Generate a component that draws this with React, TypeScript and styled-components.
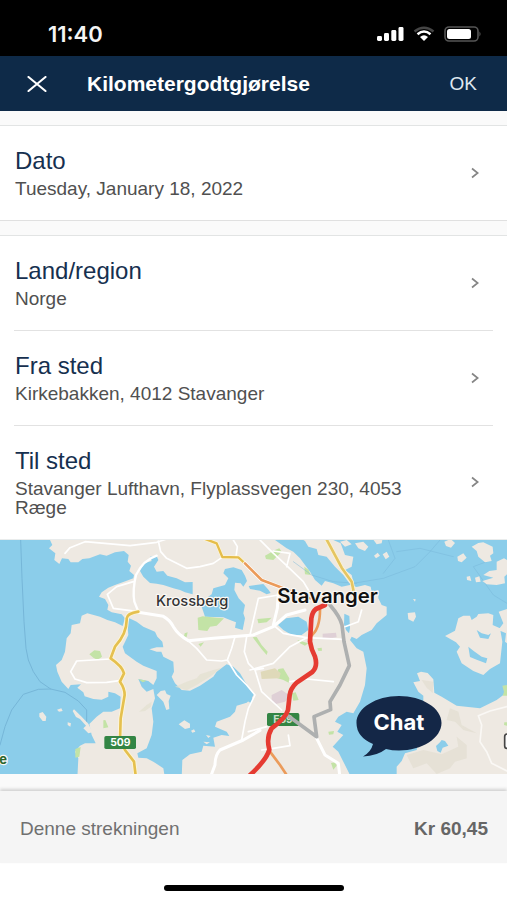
import React from "react";
import styled, { createGlobalStyle } from "styled-components";

const GlobalStyle = createGlobalStyle`
  *, *::before, *::after { box-sizing: border-box; }
  body { margin: 0; background: #fff; font-family: "Liberation Sans", Arial, sans-serif; }
  button { font: inherit; color: inherit; background: none; border: 0; padding: 0; cursor: pointer; }
  h1, h2, p { margin: 0; }
`;

const Screen = styled.div`
  display: flex;
  flex-direction: column;
  min-height: 100vh;
  background: #fff;
`;

const StatusBar = styled.div`
  display: flex;
  align-items: center;
  justify-content: space-between;
  height: 56px;
  padding: 12px 25px 0 48px;
  background: #000;
  color: #f4f4f4;
`;

const Clock = styled.time`
  font-family: Inter, sans-serif;
  font-size: 22px;
  line-height: 24px;
  font-weight: 600;
`;

const StatusIcons = styled.div`
  display: flex;
  align-items: center;
  gap: 9px;
  svg { display: block; }
`;

const Header = styled.header`
  display: flex;
  align-items: center;
  height: 55px;
  padding: 0 30px 0 22px;
  background: #0e2a48;
  color: #fff;
`;

const CloseButton = styled.button`
  display: flex;
  align-items: center;
  justify-content: center;
  width: 30px;
  height: 30px;
  margin-right: 35px;
`;

const HeaderTitle = styled.h1`
  flex: 1;
  font-size: 21px;
  line-height: 24px;
  font-weight: 700;
`;

const OkButton = styled.button`
  font-size: 19px;
  line-height: 24px;
  color: #dfe7f0;
`;

const Body = styled.main`
  display: flex;
  flex-direction: column;
  gap: 14px;
  padding: 14px 0 17px;
  background: #fafafa;
`;

const Group = styled.section<{ $closed?: boolean }>`
  background: #fff;
  border-top: 1px solid #e2e4e4;
  border-bottom: ${(p) => (p.$closed ? "1px solid #e0e0e0" : "0")};
`;

const Row = styled.button`
  display: flex;
  align-items: center;
  justify-content: space-between;
  width: calc(100% - 28px);
  margin: 0 14px;
  padding: 21px 14px 22px 1px;
  text-align: left;
  & + & { border-top: 1px solid #e2e2e2; }
`;

const RowText = styled.span`
  display: flex;
  flex-direction: column;
  gap: 4px;
  max-width: 400px;
`;

const RowTitle = styled.span`
  font-size: 24px;
  line-height: 28px;
  color: #16304f;
`;

const RowValue = styled.span`
  font-size: 19px;
  line-height: 19px;
  color: #505050;
`;

const MapArea = styled.div`
  position: relative;
  border-top: 1px solid #e9ecec;
`;

const MapDrawing = styled.svg`
  display: block;
  width: 100%;
  height: auto;
`;

const ChatButton = styled.button`
  position: absolute;
  right: 65px;
  bottom: 17px;
  width: 86px;
  height: 62px;
  color: #fff;
  svg { position: absolute; inset: 0; }
`;

const ChatLabel = styled.span`
  position: relative;
  display: block;
  padding-bottom: 8px;
  font-family: Inter, sans-serif;
  font-size: 22px;
  line-height: 24px;
  font-weight: 700;
`;

const Footer = styled.footer`
  display: flex;
  align-items: center;
  justify-content: space-between;
  height: 72px;
  padding: 4px 19px 0 20px;
  background: #f5f5f5;
  box-shadow: 0 -2px 3px #d2d2d2;
  font-size: 19px;
  color: #707070;
`;

const Amount = styled.strong`
  color: #666;
`;

const HomeArea = styled.div`
  display: flex;
  justify-content: center;
  padding: 22px 0 8px;
`;

const HomeIndicator = styled.div`
  width: 180px;
  height: 6px;
  border-radius: 3px;
  background: #000;
`;

const Chevron = () => (
  <svg width="8" height="12" viewBox="0 0 8 12" fill="none" stroke="#858585" strokeWidth="1.7" aria-hidden="true">
    <path d="M1 1.5 6.7 6 1 10.5" />
  </svg>
);

const rows = [
  { title: "Land/region", value: "Norge" },
  { title: "Fra sted", value: "Kirkebakken, 4012 Stavanger" },
  { title: "Til sted", value: "Stavanger Lufthavn, Flyplassvegen 230, 4053 Ræge" },
];

function FieldRow({ title, value }: { title: string; value: string }) {
  return (
    <Row type="button">
      <RowText>
        <RowTitle>{title}</RowTitle>
        <RowValue>{value}</RowValue>
      </RowText>
      <Chevron />
    </Row>
  );
}

const WATER = "#8bcdea";
const LAND = "#eee9e2";
const PARK = "#c3e3a6";

function RouteMap() {
  return (
    <MapDrawing viewBox="0 0 1521 702" role="img" aria-label="Kart med kjørerute fra Stavanger">
      <rect width="1521" height="702" fill={WATER} />
      <g transform="translate(0 -15)" strokeLinejoin="round" strokeLinecap="round">
        <g fill="none" stroke="#76b6d8" strokeWidth="3">
          <path d="M62 15 66 130 72 260 78 340 85 375 100 410 120 440 152 462 195 472 235 498 260 525V560" />
          <path d="M152 462 115 463 70 478 35 525 15 575 0 630" />
        </g>
        <path
          fill={LAND}
          d="M150 0V15L157 30 147 40 166 55 163 75 178 87 186 70 205 72 212 82 235 82 247 72 268 70 300 58 320 62 345 52 372 48 386 60 383 80 393 92 388 108 402 120 400 130 378 138 345 150 325 158 305 172 297 185 315 192 325 210 322 224 335 232 365 238 375 250 368 273 345 262 322 255 300 245 262 235 245 242 240 265 215 270 212 295 200 310 195 350 185 375 168 390 172 410 185 440 205 462 212 450 243 448 232 458 250 472 254 484 280 492 305 494 325 485 325 470 345 475 362 485 360 520 335 530 310 530 290 545 268 567 275 600 287 625 255 625 240 632 225 650 235 670 232 730H1055L1030 680 1015 650 998 635 1030 600 1012 590 1025 570 1005 560 1015 545 1040 530 1060 535 1080 500 1095 450 1100 400 1090 350 1070 340 1050 315 1055 305 1070 312 1085 300 1115 285 1130 265 1160 240 1160 215 1145 210 1135 190 1135 165 1115 170 1112 155 1095 150 1070 156 1050 150 1025 155 1000 145 975 138 965 152 945 135 930 110 915 90 900 70 880 50 860 40 825 15V0Z"
        />
        <path fill={LAND} d="M258 572 250 580 265 595 278 592 265 566 245 545 222 523 218 528 228 546 240 552ZM118 535 128 531 139 545 137 558 128 558 118 545ZM171 524 184 520 188 528 177 530ZM203 562 213 565 211 575 203 570Z" />
        <g fill={WATER}>
          <path d="M388 250 410 260 430 275 465 290 472 305 487 320 490 337 470 337 448 343 470 350 484 350 490 365 520 380 522 410 515 425 525 445 545 465 570 467 600 452 640 425 650 410 680 388 700 395 720 415 735 440 762 478 755 490 740 503 710 512 705 530 690 545 650 560 645 575 680 590 688 603 665 600 640 608 645 635 610 632 605 650 570 658 547 675 545 730H495L490 700 460 680 440 670 415 668 412 655 440 640 455 600 460 560 455 520 465 490 460 462 440 470 425 455 415 432 445 438 460 450 470 430 470 408 430 392 410 380 375 355 368 335 385 300 382 265Z" />
          <path d="M420 108 432 85 455 78 450 65 470 63 475 75 462 95 470 110 490 108 502 122 530 130 555 142 578 141 578 178 555 172 540 165 520 160 490 150 470 146 450 144 430 125Z" />
          <path d="M670 115 675 102 700 97 725 105 735 122 741 138 730 155 722 145 705 143 703 165 716 190 735 210 730 235 735 250 728 285 705 278 708 262 690 255 670 247 615 245 605 215 625 185 635 178 640 160 675 150 685 130Z" />
          <path d="M746 153 790 147 806 165 812 174 800 178 780 167 750 162ZM834 270 858 250 895 245 920 260 925 285 905 300 875 300 850 285Z" />
          <path d="M1033 236 1048 243 1050 280 1047 295 1038 285 1032 268ZM745 465 757 490 755 505 745 500Z" />
        </g>
        <path fill={LAND} d="M470 480 482 468 495 466 500 477 512 482 506 498 508 522 499 525 490 500ZM536 568 553 556 570 566 570 578 555 582ZM573 587 582 583 586 590 577 593ZM618 600 632 603 625 609ZM630 622 620 628 610 620Z" />
        <g fill={PARK}>
          <path d="M593 248 608 244 650 248 672 250 650 272 630 275 622 288 595 285ZM268 358 283 346 300 348 306 365 293 375 280 368ZM310 556 316 555 325 577 310 580ZM415 432 440 437 428 442ZM554 295 563 292 560 306 552 304ZM595 327 612 322 602 335ZM226 642 242 636 238 665 226 668Z" />
          <path d="M795 62 825 45 838 40 845 50 820 75 798 72ZM772 252 815 248 800 262 775 265ZM758 307 770 306 785 330 803 350 800 360 785 343ZM835 402 850 400 868 430 866 443 850 435 828 428ZM892 315 925 325 915 332 900 325ZM913 95 926 105 932 120 915 118ZM875 475 887 472 896 495 880 497ZM985 590 1002 588 1000 598 987 599ZM993 684 1005 682 1010 692 1000 704ZM952 340 965 338 966 347 955 348Z" />
        </g>
        <path fill="#dfd9b9" d="M782 410 825 400 842 415 838 430 785 432Z" />
        <path fill="#dfd0d6" d="M815 480 845 465 870 482 855 500 825 508 815 498ZM968 296 1008 293 1010 307 968 312Z" />
        <path fill="#e3dfd0" d="M525 455 560 440 590 430 600 418 640 405 665 398 630 425 590 450 560 466ZM417 530 440 510 455 500 453 515 435 528Z" opacity=".7" />

        <g fill="none" stroke="#fff" strokeWidth="5">
          <path d="M195 55 210 38 255 20 390 32 470 22 500 12M475 18 482 50 500 70 530 85 560 100 600 95 640 85 665 68M700 15 712 35 708 65M400 140 350 155 322 178 340 220 415 230M330 372 230 378 212 410 225 432 260 443 320 442 358 437" />
          <path d="M470 62Q430 75 408 120 397 165 403 200L415 230" strokeWidth="7" />
          <path d="M545 300 590 340 620 375 665 378 682 375 710 420 740 450 765 480M705 305 695 340 682 375M740 305 733 350 745 385 765 405 790 400M765 480 745 520 735 560 725 615M750 300 775 190 835 180M780 15 815 50 860 92 910 140 925 165M750 405 820 385 870 335 920 308 1030 313M870 440 920 432 1000 440M765 405 785 470 845 525M865 600 870 632 820 640 785 645M820 270 850 295 930 310M1035 275 1075 260 1085 225M860 95 870 55 820 48M745 590 800 575" />
        </g>
        <g fill="none" stroke="#fff" strokeWidth="9">
          <path d="M415 232 490 244Q510 255 520 275 535 300 565 317L640 310 760 300 820 275 860 240 915 225M780 586 730 615 660 645Q645 660 645 690L630 730M950 610 975 660 1015 685 1020 730M820 270 832 220 835 175" />
        </g>

        <g fill="none">
          <path stroke="#fff7d8" strokeWidth="13" d="M415 230Q382 235 380 250 382 295 345 335L332 370Q368 395 372 415L360 440Q374 460 374 480L362 550 360 615 375 645 402 680 408 730" />
          <path stroke="#e5c04f" strokeWidth="8" d="M415 230Q382 235 380 250 382 295 345 335L332 370Q368 395 372 415L360 440Q374 460 374 480L362 550 360 615 375 645 402 680 408 730" />
          <path stroke="#fff7d8" strokeWidth="11" d="M610 10 650 25 667 66 715 67 740 90" />
          <path stroke="#e5bd4b" strokeWidth="7" d="M610 10 650 25 667 66 715 67 740 90" />
          <path stroke="#fff" strokeWidth="12" d="M735 85 785 135 850 160 930 190" />
          <path stroke="#eb9b5a" strokeWidth="8" d="M735 85 785 135 850 160 930 190M960 215Q962 285 930 305M810 650 840 690 870 735" />
          <path stroke="#76b6d8" strokeWidth="2" opacity=".7" d="M1060 145 1150 130 1245 95 1290 50 1320 15M880 80 935 120 1000 140 1070 145M1165 15 1185 70 1150 115M1190 50 1260 40 1360 65M1460 80 1420 95 1480 180 1521 205" />
        </g>

        <g fill={LAND}>
          <path d="M915 18 925 35 950 42 955 60 980 65 1005 95 1030 120 1048 145 1062 150 1055 120 1035 105 1055 95 1060 65 1035 60 1022 25 1000 15H910ZM1065 25 1090 20 1105 35 1095 48 1075 40ZM1020 20 1040 15 1055 28 1035 35ZM1122 62 1133 53 1140 62 1128 70ZM1148 58 1160 50 1168 65 1157 73Z" />
          <path d="M1110 0H1150L1145 25 1130 28ZM1333 20 1352 12 1365 24 1353 38 1338 33ZM1372 65 1390 55 1400 68 1385 82 1374 78ZM1415 35 1435 24 1450 22 1478 35 1480 55 1470 62 1475 78 1455 82 1435 65 1430 48ZM1490 80 1512 70 1530 80V110L1513 125 1515 145 1490 150 1460 148 1447 138 1480 128 1450 120 1468 108 1490 105ZM1400 125 1410 123 1414 138 1401 135ZM1425 128 1438 124 1442 140 1428 142Z" />
          <path d="M1223 234 1245 232 1248 245 1240 260 1225 253ZM1239 192 1247 193 1245 200ZM1335 303 1365 287 1375 250 1390 242 1410 242 1415 255 1430 245 1435 237 1465 235 1480 240 1478 270 1500 280 1507 320 1500 385 1470 402 1450 420 1420 408 1385 385 1370 350 1380 335 1368 322ZM1496 230 1521 222V325L1515 320 1518 295 1495 285 1510 265Z" />
          <path d="M1190 730V695L1205 678 1215 655 1250 645 1270 570V482L1255 470 1240 442 1260 438 1251 415 1263 410 1283 414 1300 433 1303 473 1325 485 1370 512 1440 520 1490 495 1510 480H1540V730Z" />
        </g>
        <path fill={WATER} d="M1430 285 1445 295 1465 300 1473 295 1465 312 1440 308ZM1405 335 1420 347 1445 365 1462 370 1458 385 1430 374 1410 366ZM1308 633 1320 622 1325 615 1335 618 1345 632 1328 638 1322 653 1312 648ZM1510 15H1521V25ZM1053 672 1067 674 1060 682Z" />
        <path fill="#ded9c9" opacity=".5" d="M1265 435 1300 440 1298 474 1280 458ZM1220 660 1270 645 1325 658 1375 635 1370 605 1400 630 1400 670 1365 680 1350 700 1310 717 1280 685 1240 700ZM1350 520 1375 530 1385 570 1430 595 1390 585 1365 560 1340 555Z" />
        <path fill={PARK} d="M1507 452 1521 450V482L1508 482 1512 470ZM1513 562H1521V572L1512 570Z" />
        <path fill="none" stroke="#faf8f5" strokeWidth="5" d="M1521 515 1470 528 1435 542 1445 570 1440 620 1460 650 1475 685 1525 710" />
        <path fill="none" stroke="#fff6cf" strokeWidth="12" d="M978 10 1025 98 1055 140 1062 175" />
        <path fill="none" stroke="#e5c562" strokeWidth="8" d="M978 10 1025 98 1055 140 1062 175" />

        <rect x="801" y="534" width="97" height="39" rx="5" fill="#338544" />
        <text x="849" y="564" textAnchor="middle" fill="#c9e0cb" fontFamily="Inter, sans-serif" fontSize="31" fontWeight="700">E39</text>
        <path fill="none" stroke="#aeb0b0" strokeWidth="11" d="M990 210Q1020 245 1026 270L1032 320 1048 392 1020 450 990 500 992 524 942 545 950 605 865 543" />
        <path fill="none" stroke="#e53b32" strokeWidth="14" d="M975 210 948 222Q937 230 934 250L930 320Q934 345 945 365 954 395 937 411L890 443Q872 460 869 480L864 525Q858 548 815 580 798 608 808 644 800 675 745 725" />

        <rect x="313" y="603" width="95" height="39" rx="5" fill="#338544" />
        <text x="361" y="633" textAnchor="middle" fill="#fff" fontFamily="Inter, sans-serif" fontSize="31" fontWeight="700">509</text>
        <g fontFamily="Inter, sans-serif" stroke="#faf8f4" strokeWidth="7" paintOrder="stroke">
          <text x="468" y="213" fontSize="44" fontWeight="500" fill="#333">Krossberg</text>
          <text x="832" y="205" fontSize="61" fontWeight="600" fill="#111">Stavanger</text>
          <text x="-2" y="688" fontSize="39" fontWeight="700" fill="#2b662c">e</text>
        </g>
        <path fill="#fafafa" stroke="#444" strokeWidth="5" d="M1530 597H1521Q1514 597 1514 605V632Q1514 640 1521 640H1530" />
      </g>
    </MapDrawing>
  );
}

export default function App() {
  return (
    <>
      <GlobalStyle />
      <Screen>
        <StatusBar>
          <Clock>11:40</Clock>
          <StatusIcons>
            <svg width="28" height="16" viewBox="0 0 28 16" fill="#fff" aria-hidden="true">
              <rect x="1" y="10" width="5" height="5" rx="1.4" />
              <rect x="8" y="7" width="5" height="8" rx="1.4" />
              <rect x="15.3" y="4" width="5" height="11" rx="1.4" />
              <rect x="22.5" y="1" width="5" height="14" rx="1.4" />
            </svg>
            <svg width="22" height="16" viewBox="0 0 22 16" fill="none" aria-hidden="true">
              <path d="M1.5 5.5Q11-2 20.5 5.5" stroke="#454545" strokeWidth="2.5" />
              <path d="M4.5 8.2Q11 2.8 17.5 8.2" stroke="#fff" strokeWidth="2.5" />
              <path d="M7 11Q11 7.5 15 11L11 15Z" fill="#fff" />
            </svg>
            <svg width="38" height="16" viewBox="0 0 38 16" aria-hidden="true">
              <rect x="1" y="1" width="33" height="14" rx="4" fill="none" stroke="#555" strokeWidth="1.6" />
              <rect x="3" y="3" width="24" height="10" rx="2.5" fill="#fff" />
              <path d="M35.5 5.5Q37.5 8 35.5 10.5Z" fill="#666" />
            </svg>
          </StatusIcons>
        </StatusBar>
        <Header>
          <CloseButton type="button" aria-label="Lukk">
            <svg width="20" height="16" viewBox="0 0 20 16" fill="none" stroke="#fff" strokeWidth="2.1" strokeLinecap="round">
              <path d="M1.5 1 18.5 15M18.5 1 1.5 15" />
            </svg>
          </CloseButton>
          <HeaderTitle>Kilometergodtgjørelse</HeaderTitle>
          <OkButton type="button">OK</OkButton>
        </Header>
        <Body>
          <Group $closed>
            <FieldRow title="Dato" value="Tuesday, January 18, 2022" />
          </Group>
          <Group>
            {rows.map((row) => (
              <FieldRow key={row.title} {...row} />
            ))}
            <MapArea>
              <RouteMap />
              <ChatButton type="button">
                <svg width="86" height="62" viewBox="0 0 86 62" fill="#142747" aria-hidden="true">
                  <path d="M43 1C66 1 85.500 13 85.500 28S66 55.500 43 55.500Q36 55.500 30 54 21 61 7 61.500 15 57 17 49 .5 42 .5 28C.5 13 20 1 43 1Z" />
                </svg>
                <ChatLabel>Chat</ChatLabel>
              </ChatButton>
            </MapArea>
          </Group>
        </Body>
        <Footer>
          <span>Denne strekningen</span>
          <Amount>Kr 60,45</Amount>
        </Footer>
        <HomeArea>
          <HomeIndicator />
        </HomeArea>
      </Screen>
    </>
  );
}
